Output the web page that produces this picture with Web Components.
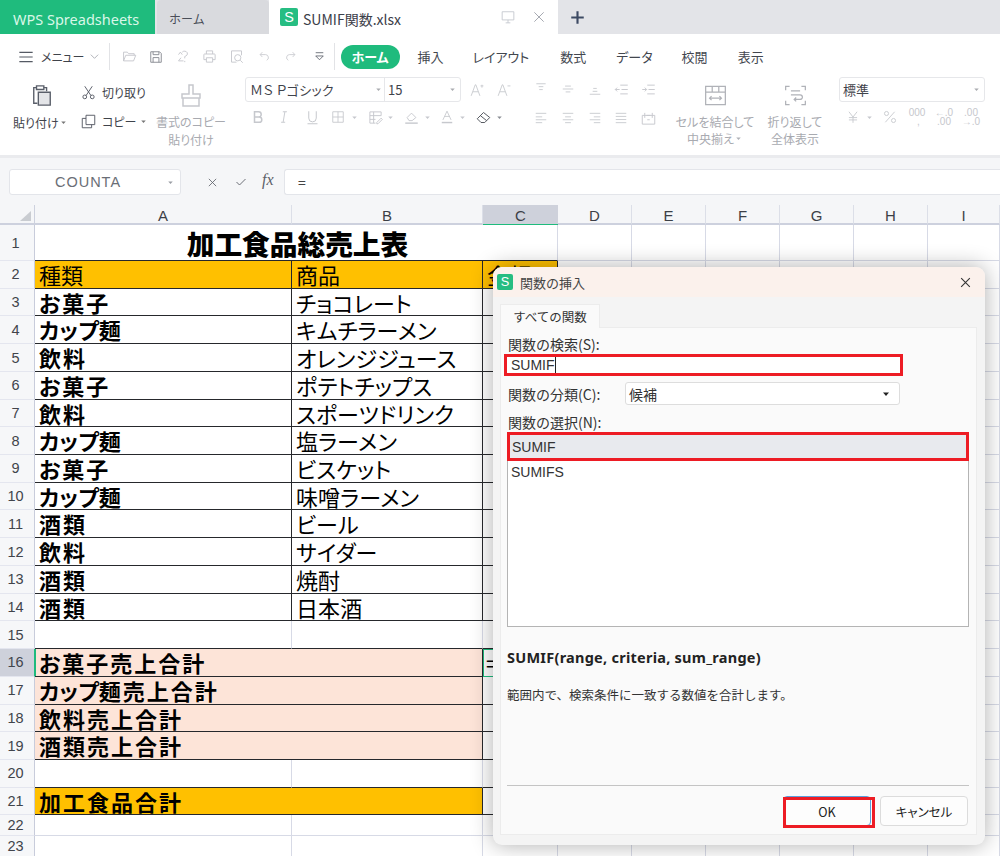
<!DOCTYPE html>
<html lang="ja"><head><meta charset="utf-8"><title>WPS</title>
<style>
html,body{margin:0;padding:0;width:1000px;height:856px;overflow:hidden;background:#fff;font-family:"Noto Sans CJK JP","Noto Sans",sans-serif;}
</style></head><body>
<wps-app></wps-app>
<script>
const JP='"Noto Sans CJK JP","Noto Sans",sans-serif';
const ICONS={
menu:'<path d="M2 5h20M2 12h20M2 19h20"/>',
chev:'<path d="M4 8l8 8 8-8"/>',
folder:'<path d="M2.500 19V5h6l2 2.500h9V10M2.500 19l3.500-9h16l-3.500 9z"/>',
save:'<path d="M3 3h15l3 3v15H3z"/><path d="M7 3v5h10V3M7 21v-8h10v8"/>',
saveas:'<path d="M10 5a5 5 0 0 1 8 1c1 3-1 5-4 6v3"/><path d="M14 19v2M4 9l3-4 3 4M8 14l-4 5h8"/>',
print:'<path d="M7 8V3h10v5M7 17H3V9a1 1 0 0 1 1-1h16a1 1 0 0 1 1 1v8h-4"/><path d="M7 14h10v7H7z"/>',
preview:'<path d="M4 3h16v7M4 3v18h8"/><circle cx="14" cy="14" r="5"/><path d="M18 18l4 4"/>',
undo:'<path d="M8 4L4 8.500l4 4.500"/><path d="M4 8.500h10a5.500 5.500 0 0 1 2 10.500"/>',
redo:'<path d="M16 4l4 4.500-4 4.500"/><path d="M20 8.500H10a5.500 5.500 0 0 0-2 10.500"/>',
more:'<path d="M5 5h14"/><path d="M5 11l7 7 7-7z" stroke-linejoin="round"/>',
clip:'<path d="M6 4H3v17h4M17 8V4h-3"/><path d="M6 2h8v4H6z"/><path d="M8 9h13v14H8z" fill="#e4e5e8"/>',
cut:'<circle cx="6" cy="19" r="3"/><circle cx="18" cy="19" r="3"/><path d="M8 17L18 2M16 17L6 2"/>',
copy:'<path d="M8 2h14v15H8z"/><path d="M8 7H2v15h15v-5"/>',
brush:'<path d="M10 2h4v9h7v4H3v-4h7z"/><path d="M4 15v8h16v-8"/>',
caret:'<path d="M6 9h12l-6 7z" fill="currentColor" stroke="none"/>',
aplus:'<path d="M2 22l7-19h1l7 19M5 15h9"/><path d="M18 5h5M20.500 3v5" stroke-width="1.500"/>',
aminus:'<path d="M2 22l7-19h1l7 19M5 15h9"/><path d="M18 5h5" stroke-width="1.500"/>',
bold:'<path d="M6 3h7a4.500 4.500 0 0 1 0 9H6zM6 12h8a4.500 4.500 0 0 1 0 9H6z" stroke-width="2.600"/>',
ital:'<path d="M10 3h7M7 21h7M13.500 3l-3 18" stroke-width="1.600"/>',
under:'<path d="M6 2v11a6 6 0 0 0 12 0V2M4 22h16" stroke-width="1.600"/>',
border:'<path d="M3 3h18v18H3zM3 12h18M12 3v18"/>',
cellst:'<path d="M21 9V3H3v18h9M3 9h18M9 3v18M3 15h9M14 20l7-7 2 2-7 7h-2z"/>',
fill:'<path d="M5 12l7-7 7 7-6 5H8z"/><path d="M2 21h20" stroke-width="2.200"/>',
fontc:'<path d="M5 17L12 2l7 15M8 11h8"/><path d="M3 21.500h18" stroke-width="2.500"/>',
eraser:'<path d="M2 14L12 4l10 8-8 8H8z"/><path d="M7 9l10 8"/>',
al1:'<path d="M4 3h16M8 8h8M9 13h6"/>',al2:'<path d="M3 12h18M7 7h10M8 17h8"/>',al3:'<path d="M3 21h18M8 16h8M9 11h6"/>',
ind1:'<path d="M10 5h12M12 12h10M10 19h12M2 12h7M5 9l-3 3 3 3"/>',
ind2:'<path d="M10 5h12M12 12h10M10 19h12M2 12h7M6 9l3 3-3 3"/>',
l1:'<path d="M3 4h18M3 10h11M3 15h18M3 20h11"/>',l2:'<path d="M3 4h18M7 10h10M3 15h18M7 20h10"/>',l3:'<path d="M3 4h18M10 10h11M3 15h18M10 20h11"/>',l4:'<path d="M3 4h18M3 9.300h18M3 14.600h18M3 20h18"/>',
dist:'<path d="M2 7h20v14H2zM6 3v8M18 3v8M9 7h6M10 14h4"/>',
merge:'<path d="M1 2h30v28H1zM1 11h30M11 2v9M21 2v9"/><path d="M7 20h18M10 17l-3 3 3 3M22 17l3 3-3 3"/>',
wrap:'<path d="M7 2H1v6M25 2h6v6M1 24v6h6M31 24v6h-6M9 9h14M9 15h14a3 3 0 0 1 0 7h-9M17 19l-3 3 3 3"/>',
yen:'<path d="M5 3l7 9 7-9M12 12v10M5 13h14M5 17h14"/>',
pct:'<circle cx="6" cy="6" r="3.500"/><circle cx="18" cy="18" r="3.500"/><path d="M20 3L4 21"/>',
x:'<path d="M4 4l16 16M20 4L4 20"/>',
check:'<path d="M3 12l6 6L21 6"/>',
plus:'<path d="M12 2v20M2 12h20" stroke-width="3.400"/>',
mon:'<path d="M2 3h20v14H2zM12 17v5M8 22h8"/>'
};
class WpsIcon extends HTMLElement{
  connectedCallback(){
    const s=+this.getAttribute('size')||16,n=this.getAttribute('name'),sw=this.getAttribute('sw')||1.500;
    const vb=this.getAttribute('vb')||'0 0 24 24';
    this.attachShadow({mode:'open'}).innerHTML=`<style>:host{display:inline-flex;flex:none;color:inherit;line-height:0}svg{display:block;overflow:visible}</style>
    <svg width="${s}" height="${s}" viewBox="${vb}" fill="none" stroke="currentColor" stroke-width="${sw}">${ICONS[n]||''}</svg>`;
  }
}
customElements.define('wps-icon',WpsIcon);
/* places icons in a flex row so that each is centred on the wanted x */
function iconRow(items,startX,color){
  let p=startX,h='';
  for(const [n,cx,s,c] of items){const m=cx-s/2-p;h+=`<wps-icon name="${n}" size="${s}" style="margin-left:${m}px;color:${c||color}"></wps-icon>`;p=cx+s/2;}
  return h;
}
class SLogo extends HTMLElement{
  connectedCallback(){
    const s=+this.getAttribute('size')||16;
    this.attachShadow({mode:'open'}).innerHTML=`<style>:host{display:inline-flex;flex:none;width:${s}px;height:${s}px;background:#26bd82;border-radius:2px;align-items:center;justify-content:center;color:#fff;font:400 ${s*.8}px "Liberation Sans",sans-serif;line-height:1}</style>S`;
  }
}
customElements.define('s-logo',SLogo);

class WpsTabbar extends HTMLElement{
  connectedCallback(){
    this.attachShadow({mode:'open'}).innerHTML=`<style>
    :host{display:flex;height:34px;background:#e3e4e8;font-family:${JP};flex:none}
    .brand{width:155px;background:#1fbb7d;color:#d9f7e8;font-size:14.500px;display:flex;align-items:center;padding:3px 0 0 13px;box-sizing:border-box;font-family:"Noto Sans",sans-serif;white-space:nowrap}
    .home{width:112px;margin-left:2px;background:#d9dade;border-radius:4px 4px 0 0;font-size:12px;color:#4a4e58;display:flex;align-items:center;padding:3px 0 0 12px;box-sizing:border-box}
    .file{width:289px;background:#fff;display:flex;align-items:center;padding-left:11px;box-sizing:border-box;font-size:14px;color:#3c4049}
    .file span{margin-left:5px;padding-top:3px}
    .r{margin-left:auto;display:flex;align-items:center;color:#9fa3ab;margin-right:12px;gap:17px}
    .plus{margin-left:12px;align-self:center;color:#3d4a63}
    </style>
    <div class="brand">WPS Spreadsheets</div><div class="home">ホーム</div>
    <div class="file"><s-logo size="18"></s-logo><span>SUMIF関数.xlsx</span><div class="r"><wps-icon name="mon" size="14" style="color:#c3c7ce"></wps-icon><wps-icon name="x" size="14" sw="1.600"></wps-icon></div></div>
    <wps-icon class="plus" name="plus" size="15"></wps-icon>`;
  }
}
customElements.define('wps-tabbar',WpsTabbar);

class RibbonTab extends HTMLElement{
  connectedCallback(){
    const a=this.hasAttribute('active');
    this.attachShadow({mode:'open'}).innerHTML=`<style>:host{display:block;font-size:13px;color:#43474f;font-feature-settings:"palt"}
    div{${a?'background:#1fbb7d;color:#fff;font-weight:700;border-radius:12px;width:59px;height:24px;display:flex;align-items:center;justify-content:center;':''}}</style><div><slot></slot></div>`;
  }
}
customElements.define('ribbon-tab',RibbonTab);

class WpsRibbon extends HTMLElement{
  connectedCallback(){
    const G='#c6c8cd';
    const top=iconRow([['folder',129,15],['save',156,14,'#80848c'],['saveas',183,15],['print',209,15],['preview',236,15],['undo',264,13],['redo',290,13]],110,G)
      +`<wps-icon name="more" size="13" style="margin-left:16px;color:#555a64"></wps-icon>`;
    const fmt=iconRow([['bold',258,14],['ital',284,14],['under',312,15],['border',338,14],['caret',354,9],['cellst',375,15],['caret',390,9],['fill',411,15],['caret',427,9],['fontc',447,14],['caret',462,9],['eraser',483,15,'#4d5159']],245,G)
      +`<wps-icon name="caret" size="9" style="margin-left:4px;color:#8a8d94"></wps-icon>`;
    const a1=iconRow([['al1',541,14],['al2',568,14],['al3',595,14],['ind1',621,15],['ind2',648,15]],530,G);
    const a2=iconRow([['l1',541,14],['l2',568,14],['l3',595,14],['l4',621,14],['dist',648,15]],530,G);
    const num=iconRow([['yen',853,14],['caret',869,9],['pct',890,14]],839,G);
    this.attachShadow({mode:'open'}).innerHTML=`<style>
    :host{display:block;height:121px;background:#fff;font-family:${JP};flex:none;box-sizing:border-box;font-size:12px;color:#3f434b;font-feature-settings:"palt"}
    span,div{white-space:nowrap}
    .top{display:flex;align-items:center;height:33px;padding-top:6px;box-sizing:content-box}
    .sep{width:1px;height:27px;background:#e2e3e6;flex:none}
    .tabs{display:flex;align-items:center;flex:none}
    .main{display:flex;height:78px}
    .paste{width:70px;padding-left:13px;box-sizing:border-box;display:flex;flex-direction:column;align-items:flex-start;line-height:17px}
    .paste>wps-icon{margin:7px 0 8px 18px}
    .cc{margin-left:11px;width:75px;display:flex;flex-direction:column;gap:9px;padding-top:5px;box-sizing:border-box}
    .cc div{display:flex;align-items:center;gap:6px;height:20px}
    .fc{width:70px;margin-right:2px;color:#a8aab0;display:flex;flex-direction:column;align-items:center;line-height:18px}
    .fc wps-icon{margin:6px 0 6px;color:#c6c8cd}
    .font{margin-left:17px;width:285px;display:flex;flex-direction:column;flex:none}
    .fbox{width:216px;height:25px;border:1px solid #e6e7ea;border-radius:3px;box-sizing:border-box;display:flex;align-items:center;font-size:13px;position:relative}
    .fn{width:139px;padding-left:4px;box-sizing:border-box;display:flex;align-items:center;justify-content:space-between;border-right:1px solid #e6e7ea;height:100%;padding-right:1px;letter-spacing:.3px}
    .fs{flex:1;padding-left:3px;display:flex;align-items:center;justify-content:space-between;padding-right:3px}
    .ic-row{display:flex;align-items:center;height:16px;margin-top:7px}
    .al{width:140px;flex:none}
    .big{display:flex;flex-direction:column;align-items:center;color:#a8aab0;line-height:17px;flex:none}
    .big wps-icon{margin:8px 0 7px;color:#b0b2b8}
    .numb{margin-left:14px;width:146px}
    .nbox{width:146px;height:25px;border:1px solid #e6e7ea;border-radius:3px;box-sizing:border-box;display:flex;align-items:center;justify-content:space-between;padding:0 3px;font-size:13px}
    .m{font:10px/9px "Liberation Sans",sans-serif;color:#c6c8cd;text-align:center;white-space:pre}
    </style>
    <div class="top">
      <wps-icon name="menu" size="16" style="margin-left:18px;color:#555a64" sw="1.700"></wps-icon>
      <span style="margin-left:7px;width:48px">メニュー</span>
      <wps-icon name="chev" size="11" style="color:#8f929a"></wps-icon>
      <div class="sep" style="margin-left:9px"></div>
      ${top}
      <div class="sep" style="margin-left:8px"></div>
      <div class="tabs">
        <ribbon-tab active style="margin-left:6px">ホーム</ribbon-tab>
        <ribbon-tab style="margin-left:18px">挿入</ribbon-tab>
        <ribbon-tab style="margin-left:29px">レイアウト</ribbon-tab>
        <ribbon-tab style="margin-left:31px">数式</ribbon-tab>
        <ribbon-tab style="margin-left:30px">データ</ribbon-tab>
        <ribbon-tab style="margin-left:29px">校閲</ribbon-tab>
        <ribbon-tab style="margin-left:30px">表示</ribbon-tab>
      </div>
    </div>
    <div class="main" style="margin-top:4px">
      <div class="paste"><wps-icon name="clip" size="22" style="color:#5a5f6a"></wps-icon><div style="display:flex;align-items:center">貼り付け<wps-icon name="caret" size="9" style="color:#777"></wps-icon></div></div>
      <div class="cc"><div><wps-icon name="cut" size="15" style="color:#555a64"></wps-icon>切り取り</div><div><wps-icon name="copy" size="15" style="color:#555a64"></wps-icon>コピー<wps-icon name="caret" size="9" style="color:#777;margin-left:-3px"></wps-icon></div></div>
      <div class="fc"><wps-icon name="brush" size="24"></wps-icon><span>書式のコピー</span><span>貼り付け</span></div>
      <div class="font">
        <div class="fbox"><div class="fn">ＭＳ Ｐゴシック<wps-icon name="caret" size="9" style="color:#a9abb0;margin-left:auto"></wps-icon></div><div class="fs">15<wps-icon name="caret" size="9" style="color:#a9abb0"></wps-icon></div>
          <wps-icon name="aplus" size="14" style="position:absolute;left:224px;top:5px;color:#c6c8cd"></wps-icon><wps-icon name="aminus" size="14" style="position:absolute;left:251px;top:5px;color:#c6c8cd"></wps-icon></div>
        <div class="ic-row" style="margin-top:7px">${fmt}</div>
      </div>
      <div class="al">
        <div class="ic-row" style="margin-top:3px;height:18px">${a1}</div>
        <div class="ic-row" style="margin-top:11px;height:18px">${a2}</div>
      </div>
      <div class="big" style="width:82px;margin-left:4px"><wps-icon name="merge" size="21" vb="0 0 32 32" sw="1.900"></wps-icon><span>セルを結合して</span><span style="display:flex;align-items:center">中央揃え<wps-icon name="caret" size="9" style="margin:0"></wps-icon></span></div>
      <div class="big" style="width:60px;margin-left:9px"><wps-icon name="wrap" size="21" vb="0 0 32 32" sw="1.900"></wps-icon><span>折り返して</span><span>全体表示</span></div>
      <div class="numb">
        <div class="nbox">標準<wps-icon name="caret" size="9" style="color:#a9abb0"></wps-icon></div>
        <div class="ic-row" style="margin-top:7px">${num}
          <span class="m" style="margin-left:10px;width:20px">000
 ,</span><span class="m" style="margin-left:7px;width:20px">←.0
.00</span><span class="m" style="margin-left:7px;width:20px">.00
→.0</span></div>
      </div>
    </div>`;
  }
}
customElements.define('wps-ribbon',WpsRibbon);

class WpsFormula extends HTMLElement{
  connectedCallback(){
    this.attachShadow({mode:'open'}).innerHTML=`<style>
    :host{display:flex;align-items:flex-start;height:50px;background:#f5f6f8;border-top:3px solid #eaebee;box-sizing:border-box;padding:11px 0 0 9px;font-family:${JP};flex:none;color:#5c6068}
    .box{height:26px;background:#fff;border:1px solid #e3e5ea;border-radius:3px;box-sizing:border-box;display:flex;align-items:center}
    .name{width:172px;justify-content:center;position:relative;font:14.500px "Liberation Sans",sans-serif;padding-right:14px;color:#6a6e76;letter-spacing:1px;font-weight:400}
    .name wps-icon{position:absolute;right:5px;top:8px;color:#9a9da4}
    .fx{font:italic 16px "Liberation Serif",serif;color:#5c6068;margin-left:15px;width:15px}
    .inp{flex:1;margin-left:7px;border-right:0;border-radius:3px 0 0 3px;padding-left:13px;font-size:14px;color:#444}
    </style>
    <div class="box name">COUNTA<wps-icon name="caret" size="9"></wps-icon></div>
    <wps-icon name="x" size="11" style="margin:8px 0 0 26px" sw="1.800"></wps-icon>
    <wps-icon name="check" size="12" style="margin:7px 0 0 17px" sw="1.800"></wps-icon>
    <span class="fx" style="margin-top:2px">fx</span>
    <div class="box inp">=</div>`;
  }
}
customElements.define('wps-formula',WpsFormula);

class WpsSheet extends HTMLElement{
  connectedCallback(){
    const K='<span class="n">カップ</span>麺';
    const rowsA=[['お菓子','チョコレート'],[K,'キムチラーメン'],['飲料','オレンジジュース'],['お菓子','ポテトチップス'],['飲料','スポーツドリンク'],[K,'塩ラーメン'],['お菓子','ビスケット'],[K,'味噌ラーメン'],['酒類','ビール'],['飲料','サイダー'],['酒類','焼酎'],['酒類','日本酒']];
    const cols=['A','B','C','D','E','F','G','H','I'];
    let h='<div class="corner"><i></i></div>';
    cols.forEach(c=>h+=`<div class="ch${c==='C'?' sel':''}">${c}</div>`);
    const hts=[36];for(let i=0;i<20;i++)hts.push(27.73);hts.push(20.5,22);
    const blank=(k='')=>`<div class="c ${k}"></div>`;
    for(let r=1;r<=23;r++){
      h+=`<div class="rh${r===16?' sel':''}">${r}</div>`;
      if(r===1){h+=`<div class="c title bb" style="grid-column:span 3">加工食品総売上表</div>`;}
      else if(r===2){h+=`<div class="c y t k">種類</div><div class="c y t k">商品</div><div class="c y t k">金額</div>`;}
      else if(r<=14){const d=rowsA[r-3];h+=`<div class="c t b k">${d[0]}</div><div class="c t p k">${d[1]}</div><div class="c k"></div>`;}
      else if(r===15){h+=blank('bb')+blank('bb')+blank('bb');}
      else if(r>=16&&r<=19){const n=['お菓子',K,'飲料','酒類'][r-16]+'売上合計';h+=`<div class="c t b k pk${r===16?' s16':''}" style="grid-column:span 2">${n}</div><div class="c t k${r===16?' cur':''}">${r===16?'=':''}</div>`;}
      else if(r===20){h+=blank('bb')+blank('bb')+blank('bb');}
      else if(r===21){h+=`<div class="c t b k y" style="grid-column:span 2">加工食品合計</div><div class="c k"></div>`;}
      else{h+=blank()+blank()+blank();}
      for(let i=0;i<6;i++)h+=blank();
    }
    this.attachShadow({mode:'open'}).innerHTML=`<style>
    :host{display:block;flex:1;min-height:0;overflow:hidden;background:#fff;font-family:${JP}}
    .g{display:grid;grid-template-columns:35px 257px 191px 75px repeat(5,74px) 72px;grid-template-rows:20px ${hts.map(x=>x+'px').join(' ')}}
    .corner,.ch{background:#f5f6f8;border-bottom:2px solid #cdd1de;box-sizing:border-box}
    .corner{position:relative;border-right:1px solid #cdd1de}
    .corner i{display:block;width:0;height:0;border-left:11px solid transparent;border-bottom:10px solid #c9ccd1;margin:6px 0 0 20px}
    .ch{border-right:1px solid #dcdfe8;text-align:center;font:15px/20px "Liberation Sans",sans-serif;color:#3c3f46;padding-top:1px}
    .ch.sel{background:#ced1db;border-bottom-color:#1fbb7d;border-bottom-width:1px;border-right:0}
    .rh{background:#f6f7f9;border-right:1px solid #c8ccdb;border-bottom:1px solid #e4e6ef;box-sizing:border-box;display:flex;align-items:center;justify-content:center;font:14.500px "Liberation Sans",sans-serif;color:#41444b;padding-right:3px}
    .rh.sel{background:#ced1db;border-right:1px solid #1fbb7d}
    .c{border-right:1px solid #d7dae6;border-bottom:1px solid #d7dae6;box-sizing:border-box;min-width:0}
    .k{border-color:#26282c}
    .bb{border-bottom-color:#26282c}
    .t{font-size:22px;line-height:26px;padding-left:4px;white-space:nowrap;color:#000;font-feature-settings:"palt"}
    .p{letter-spacing:.1px}
    .b{font-weight:700;letter-spacing:2px}
    .n{letter-spacing:.2px}
    .y{background:#ffc000}
    .pk{background:#fde4d8}
    .s16{box-shadow:inset 1px 0 0 #1fbb7d}
    .cur{outline:1px solid #1fbb7d;outline-offset:-1px;padding-left:3px}
    .title{font-weight:900;font-size:27.700px;line-height:36px;text-align:center;color:#000;white-space:nowrap;padding-left:3px;border-right-color:#d7dae6}
    </style><div class="g">${h}</div>`;
  }
}
customElements.define('wps-sheet',WpsSheet);

class WpsBtn extends HTMLElement{
  connectedCallback(){
    const ok=this.hasAttribute('primary');
    this.attachShadow({mode:'open'}).innerHTML=`<style>
    :host{display:block;width:88px;height:30px;position:relative;flex:none}
    div{box-sizing:border-box;height:100%;background:#fdfdfd;border:1px solid ${ok?'#5a9fdc':'#dcdcdc'};border-radius:4px;display:flex;align-items:center;justify-content:center;font-size:12.500px;color:#222;font-feature-settings:"palt"}
    ${ok?':host::after{content:"";position:absolute;left:0;top:1px;width:92px;height:31px;border:3px solid #ed1c24;box-sizing:border-box}':''}
    </style><div><slot></slot></div>`;
  }
}
customElements.define('wps-btn',WpsBtn);

class FuncDialog extends HTMLElement{
  connectedCallback(){
    this.attachShadow({mode:'open'}).innerHTML=`<style>
    :host{position:absolute;left:493px;top:267px;width:492px;height:578px;background:#f4f4f4;border-radius:9px;box-shadow:0 0 22px rgba(0,0,0,.32);display:flex;flex-direction:column;font-family:${JP};font-size:14px;color:#333;overflow:visible}
    .tb{height:30px;background:#fbf1ec;border-radius:9px 9px 0 0;display:flex;align-items:center;padding:0 13px 0 4px;flex:none;font-size:13px}
    .tb span{margin-left:7px;color:#444}
    .tb wps-icon{margin-left:auto;color:#333}
    .tab{margin:7px 0 0 7px;width:100px;height:24px;background:#fafafa;border:1px solid #ececec;border-bottom:0;box-sizing:border-box;display:flex;align-items:center;justify-content:center;flex:none;position:relative;z-index:1;margin-bottom:-1px;font-size:12.500px}
    .panel{margin:0 8px 10px 7px;flex:1;background:#fafafa;border:1px solid #ececec;box-sizing:border-box;display:flex;flex-direction:column;padding:0 7px 0 6px;min-height:0}
    .lb{height:18px;line-height:18px;margin-left:1px;margin-top:7px;white-space:nowrap}
    .search{width:399px;height:22px;margin:1px 0 0 -3px;border:3px solid #ed1c24;background:#fff;box-sizing:border-box;display:flex;align-items:center;padding-left:4px;font:14px "Liberation Sans",sans-serif;flex:none}
    .search i{display:inline-block;width:1px;height:16px;background:#222;margin-left:0}
    .rw{display:flex;align-items:center;height:23px;margin-top:6px;padding-left:1px}
    .sel{width:275px;height:23px;background:#fff;border:1px solid #ddd;border-radius:3px;box-sizing:border-box;display:flex;align-items:center;justify-content:space-between;padding:0 7px 0 3px}
    .list{height:195px;margin-top:1px;width:462px;border:1px solid #b4b4b4;border-top:0;background:#fff;box-sizing:border-box;flex:none;font:14px "Liberation Sans",sans-serif;color:#333}
    .it{height:29px;margin:0 -1px;background:#e8eaee;border:3px solid #ed1c24;box-sizing:border-box;display:flex;align-items:center;padding-left:2px;position:relative}
    .it2{height:21px;display:flex;align-items:center;padding-left:3px}
    .sig{margin-top:20px;font:700 14.500px "Noto Sans",sans-serif;letter-spacing:.25px;color:#222;height:20px;line-height:20px;white-space:nowrap}
    .desc{margin-top:18px;font-size:12.500px;height:20px;line-height:20px;color:#333;white-space:nowrap}
    .div{margin-top:auto;border-top:1px solid #c4c4c4;height:0}
    .btns{display:flex;justify-content:flex-end;gap:9px;margin-top:10px;margin-right:1px;margin-bottom:8px}
    </style>
    <div class="tb"><s-logo size="16"></s-logo><span>関数の挿入</span><wps-icon name="x" size="13" sw="2"></wps-icon></div>
    <div class="tab">すべての関数</div>
    <div class="panel">
      <div class="lb">関数の検索(S):</div>
      <div class="search">SUMIF<i></i></div>
      <div class="rw"><div style="width:117px;white-space:nowrap">関数の分類(C):</div><div class="sel">候補<wps-icon name="caret" size="12" style="color:#222"></wps-icon></div></div>
      <div class="lb" style="margin-top:8px">関数の選択(N):</div>
      <div class="list" role="listbox"><div class="it">SUMIF</div><div class="it2">SUMIFS</div></div>
      <div class="sig">SUMIF(range, criteria, sum_range)</div>
      <div class="desc">範囲内で、検索条件に一致する数値を合計します。</div>
      <div class="div"></div>
      <div class="btns"><wps-btn primary>OK</wps-btn><wps-btn>キャンセル</wps-btn></div>
    </div>`;
  }
}
customElements.define('func-dialog',FuncDialog);

class WpsApp extends HTMLElement{
  connectedCallback(){
    this.attachShadow({mode:'open'}).innerHTML=`<style>:host{display:flex;flex-direction:column;width:1000px;height:856px;position:relative;overflow:hidden}</style>
    <wps-tabbar></wps-tabbar><wps-ribbon></wps-ribbon><wps-formula></wps-formula><wps-sheet></wps-sheet><func-dialog></func-dialog>`;
  }
}
customElements.define('wps-app',WpsApp);
</script>
</body></html>
